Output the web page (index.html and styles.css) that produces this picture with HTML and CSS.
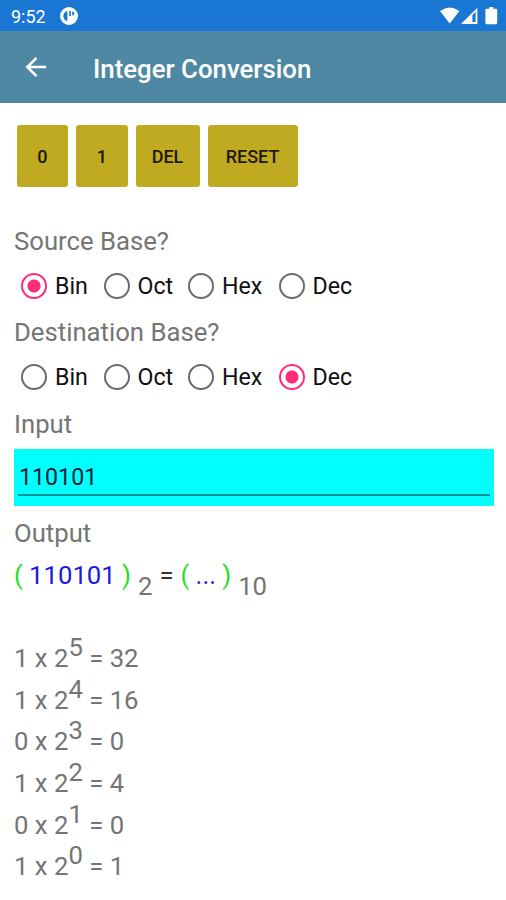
FILE: index.html
```html
<!DOCTYPE html>
<html lang="en">
<head>
  <meta charset="utf-8">
  <title>Integer Conversion</title>
  <link rel="stylesheet" href="styles.css">
</head>
<body>
  <div class="status-bar">
    <span class="clock">9:52</span>
    <svg class="app-dot" width="18" height="18" viewBox="0 0 18 18">
      <circle cx="9" cy="9" r="9" fill="#fff"/>
      <path d="M7.4 4V14.2A5.6 5.6 0 0 1 3.4 9.2C3.4 6.6 5 4.2 7.4 4Z" fill="#1976d2"/>
      <path d="M9 4h2v5H9z" fill="#1976d2" opacity=".8"/>
      <path d="M12.2 4.4a2.1 2.1 0 0 1 0 4.2z" fill="#1976d2"/>
    </svg>
    <svg class="signals" width="58" height="18" viewBox="0 0 58 18">
      <path d="M0 4.1Q9.7-3.2 19.4 4.1L9.7 16.5Z" fill="#fff"/>
      <path d="M21 17L37.4.8V17Z" fill="#fff"/>
      <path d="M32.4 8L35.6 4.8V15H32.4Z" fill="#1976d2"/>
      <path d="M49.3 0h4v1.7h2.5q1.4 0 1.4 1.4v12.7q0 1.4-1.4 1.4h-9q-1.4 0-1.4-1.4V3.1q0-1.4 1.4-1.4h2.5z" fill="#fff"/>
    </svg>
  </div>

  <header class="app-bar">
    <svg class="back" width="22" height="22" viewBox="0 0 22 22" fill="none" stroke="#fff" stroke-width="2.5">
      <path d="M21 11H2.5M11.5 1.8L2.3 11L11.5 20.2"/>
    </svg>
    <h1 class="title">Integer Conversion</h1>
  </header>

  <main class="content">
    <div class="keys">
      <button class="key">0</button>
      <button class="key">1</button>
      <button class="key key-del">DEL</button>
      <button class="key key-reset">RESET</button>
    </div>

    <div class="label">Source Base?</div>
    <div class="radios">
      <label class="radio"><span class="ring checked"></span>Bin</label>
      <label class="radio"><span class="ring"></span>Oct</label>
      <label class="radio"><span class="ring"></span>Hex</label>
      <label class="radio"><span class="ring"></span>Dec</label>
    </div>

    <div class="label">Destination Base?</div>
    <div class="radios">
      <label class="radio"><span class="ring"></span>Bin</label>
      <label class="radio"><span class="ring"></span>Oct</label>
      <label class="radio"><span class="ring"></span>Hex</label>
      <label class="radio"><span class="ring checked"></span>Dec</label>
    </div>

    <div class="label">Input</div>
    <div class="field"><div class="value">110101</div></div>

    <div class="label label-output">Output</div>
    <div class="result">
      <span class="paren">(</span>
      <span class="number">110101</span>
      <span class="paren">)</span>
      <span class="base">2</span>
      <span class="equals">=</span>
      <span class="paren">(</span>
      <span class="number">...</span>
      <span class="paren">)</span>
      <span class="base">10</span>
    </div>

    <div class="steps">
      <div class="step">1 x 2<sup>5</sup> = 32</div>
      <div class="step">1 x 2<sup>4</sup> = 16</div>
      <div class="step">0 x 2<sup>3</sup> = 0</div>
      <div class="step">1 x 2<sup>2</sup> = 4</div>
      <div class="step">0 x 2<sup>1</sup> = 0</div>
      <div class="step">1 x 2<sup>0</sup> = 1</div>
    </div>
  </main>
</body>
</html>
```
FILE: styles.css
```css
* {
  box-sizing: border-box;
}
body {
  margin: 0;
  height: 900px;
  overflow: hidden;
  background-color: #fff;
  color: #757575;
  font-family: Roboto, sans-serif;
}
.status-bar {
  display: flex;
  align-items: center;
  height: 31px;
  padding: 1px 8px 0 11px;
  background-color: #1976d2;
  color: #fff;
}
.clock {
  width: 49px;
  font-size: 18px;
}
.signals {
  margin-left: auto;
}
.app-bar {
  display: flex;
  align-items: center;
  height: 72px;
  padding-left: 25px;
  background-color: #4f88a2;
  color: #fff;
}
.back {
  margin-top: -1px;
}
.title {
  margin: 4px 0 0 46px;
  font-size: 25.8px;
  font-weight: 500;
  line-height: 30px;
}
.content {
  padding: 22px 12px 0 14px;
}
.keys {
  display: flex;
  gap: 8px;
  height: 101px;
  padding-left: 2.5px;
}
.key {
  width: 51.5px;
  height: 62px;
  padding: 0;
  border: 0;
  border-radius: 3px;
  background-color: #c0aa22;
  color: #1c1a05;
  font-family: inherit;
  font-size: 18px;
  font-weight: 500;
}
.key-del {
  width: 64px;
}
.key-reset {
  width: 90px;
}
.label {
  height: 30px;
  font-size: 25.7px;
  line-height: 30px;
}
.radios {
  display: grid;
  grid-template-columns: 82.5px 84.5px 90.5px 90px;
  height: 61.4px;
  padding: 1px 0 0 7px;
}
.radio {
  display: flex;
  align-items: center;
  height: 58px;
  color: #111;
  font-size: 23.2px;
}
.ring {
  width: 26px;
  height: 26px;
  margin-right: 8px;
  border: 2px solid #6b6b6b;
  border-radius: 50%;
}
.ring.checked {
  border-color: #ff2d78;
  background: radial-gradient(circle, #ff2d78 6px, transparent 7px);
}
.field {
  height: 57px;
  margin-top: 10.2px;
  padding: 12px 4px 0;
  background-color: #0ff;
}
.value {
  height: 35px;
  padding-left: 1px;
  border-bottom: 2px solid #0b8f92;
  color: #123;
  font-size: 23.2px;
  line-height: 33px;
}
.label-output {
  margin-top: 12px;
}
.result {
  display: flex;
  height: 89px;
  font-size: 25.7px;
  line-height: 54px;
}
.paren {
  color: #1fe01f;
}
.number {
  margin: 0 6.3px;
  color: #1a1ae0;
}
.base {
  margin: 11px 7px 0;
}
.equals {
  margin-right: 7px;
  color: #333;
}
.step {
  height: 41.7px;
  font-size: 25.7px;
  line-height: 42px;
  white-space: nowrap;
}
sup {
  font-size: inherit;
  line-height: 0;
  vertical-align: 11px;
}
```
